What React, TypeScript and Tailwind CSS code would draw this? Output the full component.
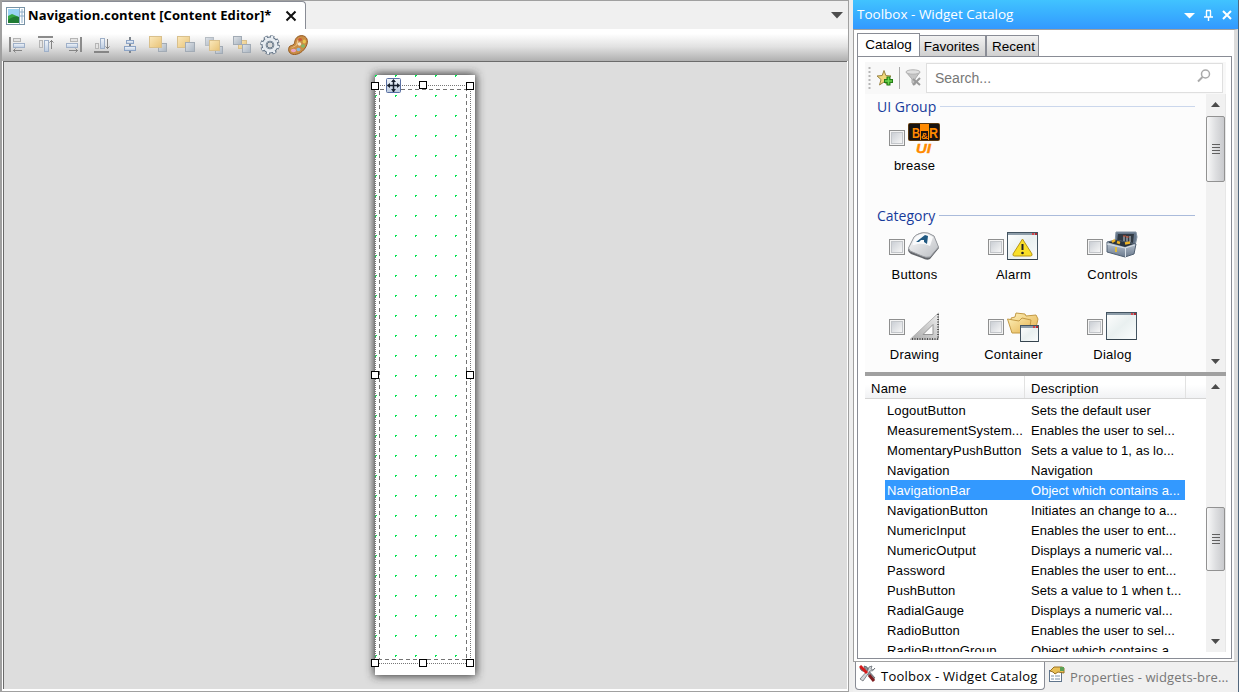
import type { ReactNode } from "react";

const ui = "font-['Open_Sans','Noto_Sans',sans-serif]";
const arial = "font-['Liberation_Sans',Arial,sans-serif]";

function Defs() {
  return (
    <svg className="absolute h-0 w-0" aria-hidden="true">
      <defs>
        <linearGradient id="blue" x1="0" y1="0" x2="0" y2="1">
          <stop offset="0" stopColor="#f2f6fb" />
          <stop offset="1" stopColor="#bccbdf" />
        </linearGradient>
        <linearGradient id="gold" x1="0" y1="0" x2="1" y2="1">
          <stop offset="0" stopColor="#fbe9bd" />
          <stop offset="1" stopColor="#e8c377" />
        </linearGradient>
        <linearGradient id="steel" x1="0" y1="0" x2="1" y2="1">
          <stop offset="0" stopColor="#dfe3e8" />
          <stop offset="1" stopColor="#a9b4c0" />
        </linearGradient>
        <linearGradient id="glass" x1="0" y1="0" x2="1" y2="1">
          <stop offset="0" stopColor="#ffffff" />
          <stop offset="0.5" stopColor="#e9f0f0" />
          <stop offset="1" stopColor="#fbfdfd" />
        </linearGradient>
        <linearGradient id="folder" x1="0" y1="0" x2="1" y2="1">
          <stop offset="0" stopColor="#fdeeb5" />
          <stop offset="1" stopColor="#e5b452" />
        </linearGradient>
        <linearGradient id="key" x1="0" y1="0" x2="1" y2="1">
          <stop offset="0" stopColor="#ffffff" />
          <stop offset="1" stopColor="#b9bcc1" />
        </linearGradient>
        <linearGradient id="ruler" x1="0" y1="1" x2="1" y2="0">
          <stop offset="0" stopColor="#a9a9a9" />
          <stop offset="1" stopColor="#efefef" />
        </linearGradient>
        <linearGradient id="metal" x1="0" y1="0" x2="0" y2="1">
          <stop offset="0" stopColor="#c9d3df" />
          <stop offset="1" stopColor="#6b7a8d" />
        </linearGradient>
      </defs>
    </svg>
  );
}

function Icon({ w = 20, h = 20, children }: { w?: number; h?: number; children: ReactNode }) {
  return (
    <svg width={w} height={h} viewBox={`0 0 ${w} ${h}`} className="block shrink-0">
      {children}
    </svg>
  );
}

const toolIcons: ReactNode[] = [
  <g key="left">
    <rect x="1" y="2" width="2" height="15" fill="#8b8b8b" />
    <rect x="5.5" y="3.5" width="7" height="3" fill="#e4e4e4" stroke="#b5b5b5" />
    <rect x="5.5" y="8.500" width="11" height="4" fill="url(#blue)" stroke="#9fb0c8" />
    <path d="M5 15.500H14M7.500 13.500L5.500 15.500L7.500 17.500" stroke="#858585" fill="none" />
  </g>,
  <g key="top">
    <rect x="2" y="1" width="15" height="2" fill="#8b8b8b" />
    <rect x="3.500" y="5.500" width="3" height="7" fill="#e4e4e4" stroke="#b5b5b5" />
    <rect x="8.500" y="5.500" width="4" height="11" fill="url(#blue)" stroke="#9fb0c8" />
    <path d="M15.500 14V5M13.500 7.500L15.500 5.500L17.500 7.500" stroke="#858585" fill="none" />
  </g>,
  <g key="right">
    <rect x="16" y="2" width="2" height="15" fill="#8b8b8b" />
    <rect x="6.500" y="3.500" width="7" height="3" fill="#e4e4e4" stroke="#b5b5b5" />
    <rect x="2.500" y="8.500" width="11" height="4" fill="url(#blue)" stroke="#9fb0c8" />
    <path d="M5 15.500H14M11.500 13.500L13.500 15.500L11.500 17.500" stroke="#858585" fill="none" />
  </g>,
  <g key="bottom">
    <rect x="2" y="16" width="15" height="2" fill="#858585" />
    <rect x="3.500" y="8.500" width="3" height="5" fill="#e4e4e4" stroke="#b5b5b5" />
    <rect x="8.500" y="3.500" width="4" height="10" fill="url(#blue)" stroke="#9fb0c8" />
    <path d="M15.500 4V14M13.500 11.500L15.500 13.500L17.500 11.500" stroke="#858585" fill="none" />
  </g>,
  <g key="center">
    <rect x="9" y="2" width="2" height="16" fill="#7e858e" />
    <rect x="6.500" y="5.500" width="7" height="3" fill="url(#blue)" stroke="#8ba3c5" />
    <rect x="4.500" y="11.500" width="11" height="4" fill="url(#blue)" stroke="#8ba3c5" />
  </g>,
  <g key="front">
    <rect x="10.500" y="8.500" width="8" height="8" fill="url(#steel)" stroke="#a2abb5" />
    <rect x="1.500" y="1.500" width="12" height="11" fill="url(#gold)" stroke="#d9c08c" />
  </g>,
  <g key="back">
    <rect x="1.500" y="1.500" width="12" height="11" fill="url(#gold)" stroke="#d9c08c" />
    <rect x="9.500" y="7.500" width="9" height="9" fill="url(#steel)" stroke="#a2abb5" />
  </g>,
  <g key="forward">
    <rect x="1.500" y="2.500" width="8" height="8" fill="url(#steel)" stroke="#b6bdc4" />
    <rect x="11.500" y="11.500" width="7" height="7" fill="url(#steel)" stroke="#a2abb5" />
    <rect x="5.500" y="5.500" width="10" height="10" fill="url(#gold)" stroke="#d9c08c" />
  </g>,
  <g key="backward">
    <rect x="6.500" y="5.500" width="8" height="8" fill="url(#gold)" stroke="#d9c08c" />
    <rect x="1.500" y="1.500" width="8" height="8" fill="url(#steel)" stroke="#a2abb5" />
    <rect x="10.500" y="9.500" width="8" height="8" fill="url(#steel)" stroke="#a2abb5" />
  </g>,
  <g key="gear">
    <circle cx="10" cy="10" r="8.300" fill="none" stroke="#5d6e80" strokeWidth="3" strokeDasharray="4 2.519" />
    <circle cx="10" cy="10" r="6" fill="none" stroke="#5d6e80" strokeWidth="5" />
    <circle cx="10" cy="10" r="8.100" fill="none" stroke="#eef2f6" strokeWidth="2.200" strokeDasharray="2.300 4.062" strokeDashoffset="-0.800" />
    <circle cx="10" cy="10" r="5.900" fill="none" stroke="#e6ebf0" strokeWidth="3.200" />
    <circle cx="10" cy="10" r="3" fill="#dadada" stroke="#6b7c8c" strokeWidth="1" />
  </g>,
  <g key="palette">
    <path d="M12 .8C17.500-.3 20.500 4 19 9C17.500 14.500 12 19.500 6.500 19.500C1.500 19.500-.5 15.500 1.200 12C2.500 9.500 5 11.500 6.300 8.500C6.800 6.500 7 2 12 .8Z" fill="#c98d45" stroke="#94591f" />
    <path d="M12.500 2.500C9.500 3.500 9 6 8.500 9C7.500 12 3.500 11 2.800 14C4 11.500 7 13 9.500 9.500C10.500 7 10 4.500 12.500 2.500Z" fill="#eec58c" />
    <ellipse cx="12" cy="4.500" rx="2" ry="1.600" fill="#c95838" />
    <ellipse cx="16.300" cy="6.500" rx="1.600" ry="2" fill="#e9c750" />
    <ellipse cx="15" cy="11" rx="2" ry="1.800" fill="#85b767" />
    <ellipse cx="10.500" cy="14.500" rx="2" ry="1.700" fill="#8bb8d8" />
    <ellipse cx="5.500" cy="15.500" rx="2.600" ry="1.800" fill="#e7a5c6" />
    <circle cx="11.500" cy="9" r="1.800" fill="#f3e5cd" />
  </g>,
];

function Toolbar() {
  return (
    <div className="flex h-8 shrink-0 items-center gap-2 bg-linear-to-b from-white from-15% via-[#e2e2e2] via-55% to-[#b0b0b0] pl-[6px]">
      {toolIcons.map((g, i) => (
        <Icon key={i}>{g}</Icon>
      ))}
    </div>
  );
}

const handles = [
  [1, 12], [49, 11], [96, 12],
  [1, 301], [96, 301],
  [1, 589], [49, 589], [96, 589],
];

function ContentPage() {
  const dots: ReactNode[] = [];
  for (let y = 0; y < 30; y++)
    for (let x = 0; x < 5; x++)
      dots.push(<path key={`${x}-${y}`} d={`M${5 + x * 20} ${5 + y * 20}h2v1h-1v1h-1z`} fill={"#00e650"} />);
  return (
    <div className="ml-[366px] mt-[8px] h-[610px] w-[110px]">
      <svg width="110" height="610" viewBox="0 0 110 610" className="block overflow-visible" shapeRendering="crispEdges">
        <defs>
          <filter id="shade" x="-30%" y="-5%" width="160%" height="110%">
            <feGaussianBlur stdDeviation="5" />
          </filter>
        </defs>
        <rect x="4" y="4" width="102" height="602" fill="#333333" filter="url(#shade)" />
        <rect x="5" y="5" width="100" height="600" fill="white" />
        {dots}
        <rect x="5.500" y="15.500" width="95" height="578" fill="none" stroke="#777777" strokeDasharray="1 1" />
        <rect x="9.500" y="19.500" width="87" height="570" fill="none" stroke="#747474" strokeDasharray="4 3" />
        <g shapeRendering="auto">
          <rect x="16.500" y="8.500" width="14" height="14" rx="1" fill="url(#blue)" stroke="#5a70a3" />
          <path d="M23.500 10v12M17.500 15.500h12" stroke="#17202e" strokeWidth="1.500" />
          <path d="M23.500 9l2.500 3h-5zM23.500 22l2.500-3h-5zM17 15.500l3-2.500v5zM30 15.500l-3-2.500v5z" fill="#17202e" />
        </g>
        {handles.map(([x, y]) => (
          <rect key={`${x}-${y}`} x={x + 0.5} y={y + 0.5} width="7" height="7" fill="white" stroke="black" />
        ))}
      </svg>
    </div>
  );
}

function Editor() {
  return (
    <section className="flex h-[692px] w-[849px] flex-col border-b border-l-2 border-r border-t border-[#a0a0a0] bg-white">
      <div className="flex h-7 shrink-0 items-start bg-[#f0f0f0]">
        <div className="flex h-7 w-[304px] items-center rounded-tr-[4px] border-r border-t border-[#898c95] bg-white pl-1 pt-px">
          <Icon w={19} h={19}>
            <rect x=".5" y=".5" width="18" height="17" fill="white" stroke="#7893a6" />
            <path d="M2 2h11v14H2z" fill="#9ad3f4" />
            <path d="M2 9l4-2 7 3v6H2z" fill="#35a642" />
            <path d="M2 13q6-5 11-3v6H2z" fill="#207c34" />
            <path d="M13.500 1v16M16 2v14M14 5h4M14 9h4" stroke="#8daec9" />
          </Icon>
          <span className={`${ui} ml-[3px] w-[246px] whitespace-nowrap text-[13px] font-bold tracking-[0.11px]`}>
            Navigation.content [Content Editor]*
          </span>
          <svg width="12" height="12" className="ml-[11px] block">
            <path d="M1.500 1.500L10.500 10.500M10.500 1.500L1.500 10.500" stroke="#111111" strokeWidth="2" />
          </svg>
        </div>
        <svg width="12" height="8" className="ml-auto mr-[5px] mt-[11px] block">
          <path d="M0 0h12L6 6.500z" fill="#4d4d4d" />
        </svg>
      </div>
      <Toolbar />
      <div className="mx-px h-[628px] overflow-hidden border-l border-t border-[#6b6b6b] bg-[#dddddd]">
        <ContentPage />
      </div>
    </section>
  );
}

function CheckBox() {
  return (
    <span className="flex h-4 w-4 shrink-0 items-center justify-center border border-[#8e8f8f] bg-[#f4f4f4]">
      <span className="h-3 w-3 border border-[#c3c6ca] bg-linear-to-br from-[#cbcfd5] to-[#f6f6f6]" />
    </span>
  );
}

function Win({ x, y, w, h }: { x: number; y: number; w: number; h: number }) {
  return (
    <g>
      <rect x={x + 0.5} y={y + 0.5} width={w - 1} height={h - 1} fill="url(#glass)" stroke="#435461" />
      <rect x={x + 1} y={y + 1} width={w - 2} height="2" fill="#8d9da9" />
      <rect x={x + w - 6} y={y + 1} width="2" height="2" fill="#d1464a" />
      <rect x={x + w - 3} y={y + 1} width="2" height="2" fill="#b52a32" />
      <path d={`M${x + 1} ${y + h - 0.5}h${w - 2}`} stroke="#35434d" strokeWidth="1" />
    </g>
  );
}

const pictures: Record<string, ReactNode> = {
  brease: (
    <g>
      <rect x=".5" y="1.500" width="31" height="17" rx="1" fill="#ff8a00" stroke="#5b3a12" />
      <path d="M1 2h11v16H1zM13 9h7v9h-7zM21 2h10v16H21z" fill="#181310" />
      <text x="4" y="15.500" fontSize="15" fontWeight="bold" fontFamily="Liberation Sans" fill="#ff8a00" textLength="8" lengthAdjust="spacingAndGlyphs">B</text>
      <text x="13" y="16.500" fontSize="9" fontWeight="bold" fontFamily="Liberation Sans" fill="#ff8a00" textLength="7" lengthAdjust="spacingAndGlyphs">&amp;</text>
      <text x="21" y="15.500" fontSize="15" fontWeight="bold" fontFamily="Liberation Sans" fill="#ff8a00" textLength="9" lengthAdjust="spacingAndGlyphs">R</text>
      <text x="8" y="30.500" fontSize="13" fontWeight="bold" fontStyle="italic" fontFamily="Liberation Sans" fill="#ff8a00" stroke="#ff8a00" strokeWidth=".4" textLength="15" lengthAdjust="spacingAndGlyphs">UI</text>
    </g>
  ),
  Buttons: (
    <g>
      <path d="M0 19L6 6Q11 0 20 2L26 5L31 17L22 28Q19 30 14 27L3 23Q0 21 0 19Z" fill="#62656a" />
      <path d="M.5 17L6 6Q11 1 20 2L26 5L30.500 16L22 26Q18 27 14 25L2 20Z" fill="url(#key)" stroke="#999ca1" />
      <path d="M7 7Q13 1 19 3L25 6L22 15Q14 11 6 14Q3 15 7 7Z" fill="#f9fafb" />
      <path d="M8 11L17 4L20 5L19 13L16 11L16 9L13 9L11 11ZM15 7L17 6V8Z" fill="#205982" />
    </g>
  ),
  Alarm: (
    <g>
      <Win x={0} y={1} w={31} h={28} />
      <path d="M15.500 8L25 23Q25.500 25 23.500 25H7.500Q5.500 25 6 23Z" fill="#f9df28" stroke="#b99616" />
      <path d="M15.500 13v6" stroke="#222222" strokeWidth="2" />
      <circle cx="15.500" cy="22" r="1.300" fill="#222222" />
    </g>
  ),
  Controls: (
    <g>
      <path d="M10 1L30 1L31 6L29 15L24 17L9 11Z" fill="#65768a" stroke="#8493a3" />
      <path d="M12 3L28 3L27 12L11 10Z" fill="#303943" />
      <path d="M18 5v5M21 5v6M24 5v6" stroke="#adb6bb" strokeWidth="1.200" />
      <path d="M17 5h3M20 6h3" stroke="#c64b2b" />
      <path d="M1 11L10 9L30 13L28 23L19 26L1 21Z" fill="url(#metal)" stroke="#516072" />
      <path d="M2 11.500L10 9L28 13L19 16Z" fill="#29343f" />
      <path d="M6 11l3-2M11 11l3 1M19 12.500l5-1" stroke="#eeb326" strokeWidth="2.500" />
      <path d="M1 13L19 17L29 14M19.500 17V26" stroke="#d7e0e7" fill="none" />
      <rect x="9" y="16" width="2" height="5" fill="#e2bb38" />
    </g>
  ),
  Drawing: (
    <g>
      <path d="M2 28.500L30.500 2V28.500Z" fill="url(#ruler)" stroke="#b5b5b5" />
      <path d="M15 23.500L25 13.500V23.500Z" fill="#fcfcfc" stroke="#969696" />
      <path d="M30 3V28M4 28H30" stroke="#303030" strokeWidth="1.500" strokeDasharray="1 1.500" />
    </g>
  ),
  Container: (
    <g>
      <path d="M4 7L8 6L9 2L18 3L19 5L29 4L31 8L28 21L6 21Z" fill="url(#folder)" stroke="#c39a45" />
      <path d="M.5 8L12 10L15 7L24 9L22 22L5 22Z" fill="url(#folder)" stroke="#c39a45" />
      <Win x={13} y={14} w={19} h={17} />
    </g>
  ),
  Dialog: <Win x={0} y={1} w={31} h={28} />,
};

function Tile({ name }: { name: string }) {
  return (
    <div className="flex h-20 w-[99px] shrink-0 flex-col items-center">
      <div className="flex h-8 items-center gap-[3px]">
        <CheckBox />
        <Icon w={33} h={32}>{pictures[name]}</Icon>
      </div>
      <span className="mt-1 text-[13px] leading-4 tracking-[0.25px]">{name}</span>
    </div>
  );
}

function GroupTitle({ children, line }: { children: ReactNode; line: string }) {
  return (
    <div className="ml-3 flex h-6 items-center">
      <span className={`${ui} text-[14px] text-[#173b9b]`}>{children}</span>
      <span className={`ml-1 mr-[11px] h-px flex-1 ${line}`} />
    </div>
  );
}

function ScrollBar({ before, size }: { before: string; size: string }) {
  return (
    <div className="flex w-5 shrink-0 flex-col items-start border-r border-[#e7e7e7] bg-[#f1f1f1]">
      <svg width="9" height="5" className="ml-[5px] mt-2 block shrink-0"><path d="M0 5L4.500 0L9 5Z" fill="#4b4b4b" /></svg>
      <div className={`${before} shrink-0`} />
      <div className={`${size} flex w-[19px] shrink-0 flex-col items-center justify-center gap-[2px] rounded-[2px] border border-[#929292] bg-linear-to-r from-[#f8f8f8] via-[#dedfe1] to-[#c9cacd]`}>
        <span className="h-px w-2 bg-[#606060]" />
        <span className="h-px w-2 bg-[#606060]" />
        <span className="h-px w-2 bg-[#606060]" />
        <span className="h-px w-2 bg-[#606060]" />
      </div>
      <svg width="9" height="5" className="mb-2 ml-[5px] mt-auto block shrink-0"><path d="M0 0H9L4.500 5Z" fill="#4b4b4b" /></svg>
    </div>
  );
}

const rows = [
  ["LogoutButton", "Sets the default user"],
  ["MeasurementSystem...", "Enables the user to sel..."],
  ["MomentaryPushButton", "Sets a value to 1, as lo..."],
  ["Navigation", "Navigation"],
  ["NavigationBar", "Object which contains a..."],
  ["NavigationButton", "Initiates an change to a..."],
  ["NumericInput", "Enables the user to ent..."],
  ["NumericOutput", "Displays a numeric val..."],
  ["Password", "Enables the user to ent..."],
  ["PushButton", "Sets a value to 1 when t..."],
  ["RadialGauge", "Displays a numeric val..."],
  ["RadioButton", "Enables the user to sel..."],
  ["RadioButtonGroup", "Object which contains a..."],
];

function WidgetList() {
  return (
    <div className="flex h-[276px] overflow-hidden">
      <div className="w-[341px] shrink-0">
        <div className="flex h-[23px] items-center border-b border-[#d5d5d5] bg-linear-to-b from-white from-40% to-[#f1f2f4] tracking-[0.25px]">
          <span className="h-[22px] w-[160px] border-r border-[#e2e2e2] pl-1.5 pt-0.5 leading-[22px]">Name</span>
          <span className="h-[22px] w-[161px] border-r border-[#e2e2e2] pl-1.5 pt-0.5 leading-[22px]">Description</span>
        </div>
        <div className="ml-5 mt-px w-[300px]">
          {rows.map(([name, text]) => (
            <div
              key={name}
              className={`flex h-5 items-center whitespace-nowrap pt-px ${name === "NavigationBar" ? "bg-[#3399ff] text-white" : ""}`}
            >
              <span className="w-[146px] pl-0.5 tracking-[0.12px]">{name}</span>
              <span className="tracking-[0.03px]">{text}</span>
            </div>
          ))}
        </div>
      </div>
      <ScrollBar before="h-[118px]" size="h-16" />
    </div>
  );
}

function SearchBar() {
  return (
    <div className="flex h-8 items-center bg-[#f8f8f8]">
      <svg width="5" height="24" className="ml-[2px] block shrink-0"><path d="M2.500 1v22" stroke="#b5b5b5" strokeWidth="2" strokeDasharray="2 2" /></svg>
      <svg width="18" height="19" viewBox="0 0 18 19" className="ml-1 block shrink-0">
        <path d="M8 1.500L9.800 6.500L15 7L11 10.500L12.300 16L8 13L3.500 16L5 10.500L1 7L6.200 6.500Z" fill="#f1d779" stroke="#9a8547" />
        <path d="M12.500 7.500v9M8 12h9" stroke="#247d17" strokeWidth="4" />
        <path d="M12.500 8.500v7M9 12h7" stroke="#6dd84d" strokeWidth="1.600" />
      </svg>
      <span className="ml-[5px] h-[22px] w-px bg-[#aaaaaa]" />
      <svg width="17" height="18" viewBox="0 0 17 18" className="ml-[5px] block shrink-0">
        <path d="M1 3L7 10V14L10 16V10L15 3Z" fill="#c5c5c5" stroke="#ababab" />
        <ellipse cx="8" cy="3" rx="7" ry="2.200" fill="#e0e0e0" stroke="#b3b3b3" />
        <path d="M8 10l7 6M15 9l-7 7" stroke="#999999" strokeWidth="2" />
      </svg>
      <div className="ml-1 flex h-[30px] w-[297px] items-center border border-[#dfdfdf] bg-white px-2">
        <span className="text-[14px] text-[#777777]">Search...</span>
        <svg width="16" height="16" viewBox="0 0 16 16" className="mb-1 ml-auto mr-0.5 block">
          <circle cx="9.500" cy="6" r="4" fill="none" stroke="#aaaaaa" strokeWidth="1.500" />
          <path d="M6.500 9L2 13.500" stroke="#aaaaaa" strokeWidth="2" />
        </svg>
      </div>
    </div>
  );
}

function Toolbox() {
  return (
    <section className="ml-1 flex h-[692px] w-[386px] flex-col border-r border-[#52677d] bg-[#f0f0f0]">
      <div className={`${ui} flex h-[29px] shrink-0 items-center bg-linear-to-b from-[#41c3ff] to-[#3399ff] pl-1 text-[13.500px] text-white`}>
        <span className="whitespace-nowrap">Toolbox - Widget Catalog</span>
        <svg width="50" height="14" viewBox="0 0 50 14" className="ml-auto mr-[4px] block">
          <path d="M0 5h11L5.500 10.500z" fill="white" />
          <path d="M22 2.500h5M22.500 3v6M26.500 3v6M20 9h9M24.500 9v4" fill="none" stroke="white" strokeWidth="1.400" />
          <path d="M39 3l8 8M47 3l-8 8" stroke="white" strokeWidth="2" />
        </svg>
      </div>
      <div className="h-[633px] shrink-0 border-b border-l border-r-4 border-t border-[#a0a0a0] border-r-[#dcdcdc] bg-white pl-[3px] pt-[3px]">
        <div className="flex h-6 items-end text-[13.500px] leading-none">
          <span className="flex h-6 w-[63px] items-center justify-center border-x border-t border-[#898c95] bg-white pb-[2px]">Catalog</span>
          <span className="flex h-[22px] w-[66px] items-center justify-center border-r border-t border-[#898c95] bg-linear-to-b from-[#f2f2f2] to-[#cecece] pr-0.5 pt-px">Favorites</span>
          <span className="flex h-[22px] w-[53px] items-center justify-center border-x border-t border-[#898c95] bg-linear-to-b from-[#f2f2f2] to-[#cecece] pl-0.5 pt-px">Recent</span>
        </div>
        <div className="-mt-px flex h-[603px] w-[375px]">
          <div className="w-full border border-[#898c95] pl-[7px] pt-[5px]">
            <div className="w-[361px]">
              <SearchBar />
              <div className="flex h-[278px]">
                <div className="flex w-[341px] shrink-0 flex-col bg-[#fcfcfc] text-[13px]">
                  <GroupTitle line="bg-[#cbd7ec]">UI Group</GroupTitle>
                  <div className="mt-1 flex h-[81px]"><Tile name="brease" /></div>
                  <GroupTitle line="bg-[#aabbdb]">Category</GroupTitle>
                  <div className="mt-1 flex"><Tile name="Buttons" /><Tile name="Alarm" /><Tile name="Controls" /></div>
                  <div className="flex h-[61px]"><Tile name="Drawing" /><Tile name="Container" /><Tile name="Dialog" /></div>
                </div>
                <ScrollBar before="h-[9px]" size="h-[66px]" />
              </div>
              <div className="h-1 bg-[#a0a0a0]" />
              <div className="text-[13px]"><WidgetList /></div>
            </div>
          </div>
        </div>
      </div>
      <div className={`${ui} flex h-[30px] shrink-0 items-start text-[13px]`}>
        <div className="ml-[2px] flex h-[28px] w-[190px] items-center rounded-b-[4px] border-b border-l border-r border-[#898c95] bg-white pl-[3px]">
          <svg width="17" height="18" viewBox="0 0 17 18" className="mb-1 block shrink-0">
            <path d="M1 3Q2 7 6 6L13 14L16 13L9 5Q9 1 5 1L6 4L3 5Z" fill="#8b9199" stroke="#565b62" strokeWidth=".7" />
            <path d="M16 3Q14 7 11 6L4 16L1 14L9 5Q9 1 13 1L12 4L14 5Z" fill="#d3d6d9" stroke="#5c6268" strokeWidth=".7" />
            <path d="M1 1L8 8" stroke="#d51a1a" strokeWidth="3" />
            <path d="M10 10L15 16" stroke="#7e1d20" strokeWidth="3" />
          </svg>
          <span className="ml-[5px] whitespace-nowrap pt-[3px] tracking-[0.25px]">Toolbox - Widget Catalog</span>
        </div>
        <div className="flex h-[28px] items-center pl-[3px] text-[#777777]">
          <svg width="17" height="17" viewBox="0 0 17 17" className="mb-1 block shrink-0">
            <rect x="1.500" y="4.500" width="12" height="11" fill="white" stroke="#60758c" />
            <path d="M3 10h3M3 13h3M7 10h5M7 13h5" stroke="#7890a8" />
            <path d="M2 5L6 1H14L16 2V7L10 6L7 8L5 6Z" fill="#e9c057" stroke="#987123" />
            <path d="M12 1h4v4h-4z" fill="#5c9f54" />
          </svg>
          <span className="ml-[5px] whitespace-nowrap pt-[3px] tracking-[0.12px]">Properties - widgets-bre...</span>
        </div>
      </div>
    </section>
  );
}

export default function App() {
  return (
    <main className={`${arial} flex h-[692px] w-[1239px] overflow-hidden bg-[#eeeeee] text-black`}>
      <Defs />
      <Editor />
      <Toolbox />
    </main>
  );
}
